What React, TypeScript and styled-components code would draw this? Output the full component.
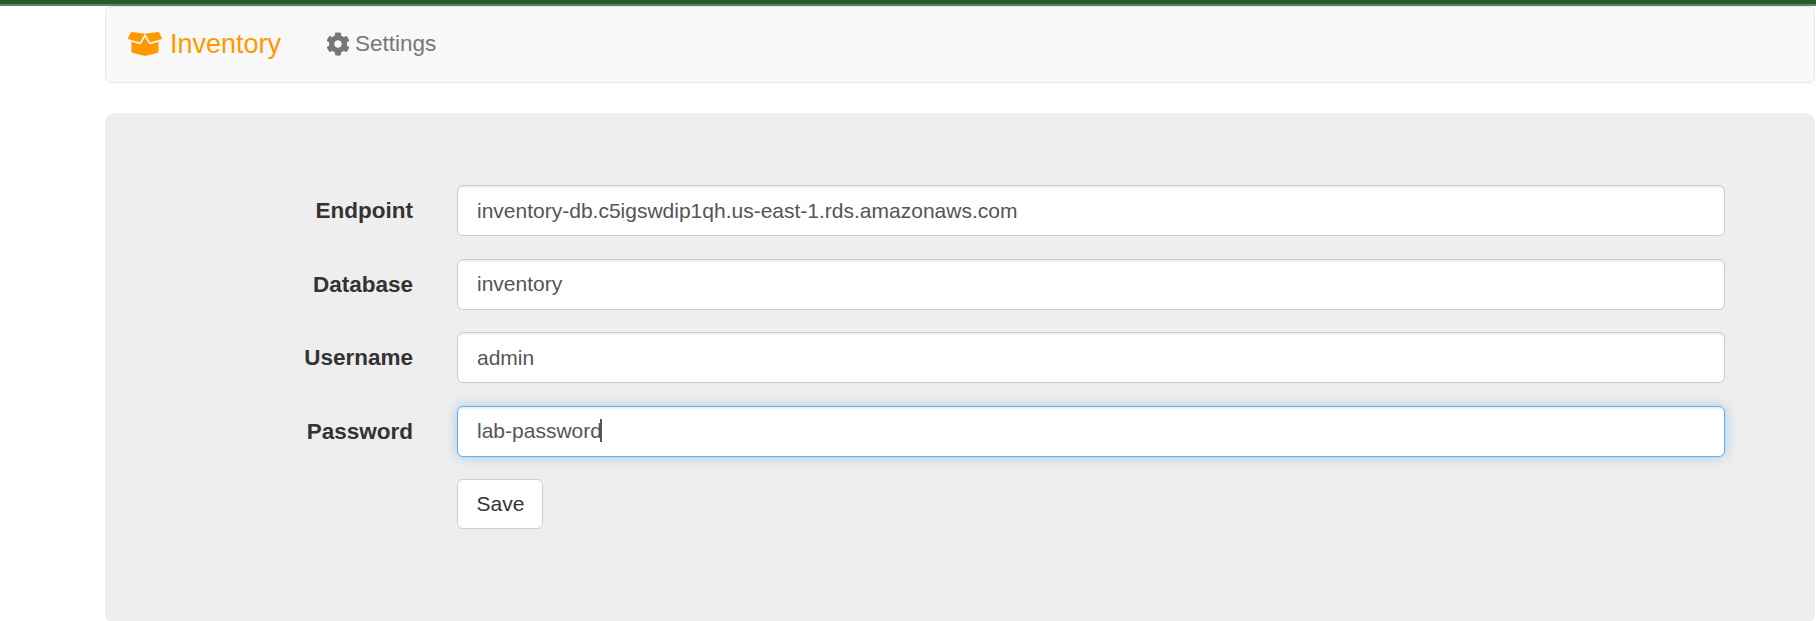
import React from 'react';
import styled, { createGlobalStyle, css } from 'styled-components';
import { FaBoxOpen, FaCog } from 'react-icons/fa';

const GlobalStyle = createGlobalStyle`
  * { box-sizing: border-box; }
  html, body { margin: 0; height: 100%; overflow: hidden; }
  body {
    background: #fff;
    color: #333;
    font-family: 'Liberation Sans', Arial, sans-serif;
    font-size: 21px;
    line-height: 30px;
  }
`;

const TopBar = styled.div`
  height: 6px;
  background: #265c2b;
  border-bottom: 2px solid #5c855f;
`;

const Container = styled.div`
  width: 1710px;
  margin-left: 105px;
`;

const Navbar = styled.nav`
  display: flex;
  align-items: center;
  height: 77px;
  padding: 0 22px 1px;
  margin-bottom: 30px;
  background: #f8f8f8;
  border: 1px solid #e7e7e7;
  border-radius: 6px;
`;

const NavLink = styled.a<{ $brand?: boolean }>`
  display: flex;
  align-items: center;
  gap: 5px;
  white-space: nowrap;
  color: #777;
  font-size: 22.5px;

  svg {
    margin-bottom: 1px;
  }

  ${({ $brand }) =>
    $brand &&
    css`
      gap: 8px;
      margin-right: 45px;
      color: #ff9900;
      font-size: 27px;

      svg {
        margin-bottom: 0;
      }
    `}
`;

const Panel = styled.main`
  height: 510px;
  padding: 72px 90px;
  background: #eee;
  border-radius: 9px;
`;

const Form = styled.form`
  display: flex;
  flex-direction: column;
  gap: 22.5px;
`;

const Row = styled.div`
  display: grid;
  grid-template-columns: 218px 1268px;
  column-gap: 44px;
  align-items: center;
`;

const Label = styled.label`
  padding-top: 1px;
  text-align: right;
  font-size: 22.5px;
  font-weight: 700;
`;

const Field = styled.div<{ $focused?: boolean }>`
  display: flex;
  align-items: center;
  height: 51px;
  padding: 0 19px;
  color: #555;
  background: #fff;
  border: 1px solid ${({ $focused }) => ($focused ? '#66afe9' : '#ccc')};
  border-radius: 6px;
  box-shadow: inset 0 1.5px 1.5px rgba(0, 0, 0, 0.075)
    ${({ $focused }) => $focused && ', 0 0 12px rgba(102, 175, 233, 0.6)'};
`;

const Caret = styled.span`
  width: 2px;
  height: 23px;
  margin-left: -2px;
  margin-bottom: 1px;
  background: #555;
`;

const SaveButton = styled.button`
  grid-column: 2;
  justify-self: start;
  width: 86px;
  height: 50px;
  padding: 0 0 0 1px;
  color: #333;
  background: #fff;
  border: 1px solid #ccc;
  border-radius: 6px;
  font: inherit;
`;

const fields = [
  { label: 'Endpoint', value: 'inventory-db.c5igswdip1qh.us-east-1.rds.amazonaws.com' },
  { label: 'Database', value: 'inventory' },
  { label: 'Username', value: 'admin' },
  { label: 'Password', value: 'lab-password', focused: true },
];

export default function App() {
  return (
    <>
      <GlobalStyle />
      <TopBar />
      <Container>
        <Navbar>
          <NavLink $brand>
            <FaBoxOpen size={34} />
            <span>Inventory</span>
          </NavLink>
          <NavLink>
            <FaCog size={24} />
            <span>Settings</span>
          </NavLink>
        </Navbar>
        <Panel>
          <Form>
            {fields.map(({ label, value, focused }) => (
              <Row key={label}>
                <Label>{label}</Label>
                <Field $focused={focused}>
                  <span>{value}</span>
                  {focused && <Caret />}
                </Field>
              </Row>
            ))}
            <Row>
              <SaveButton type="button">Save</SaveButton>
            </Row>
          </Form>
        </Panel>
      </Container>
    </>
  );
}
